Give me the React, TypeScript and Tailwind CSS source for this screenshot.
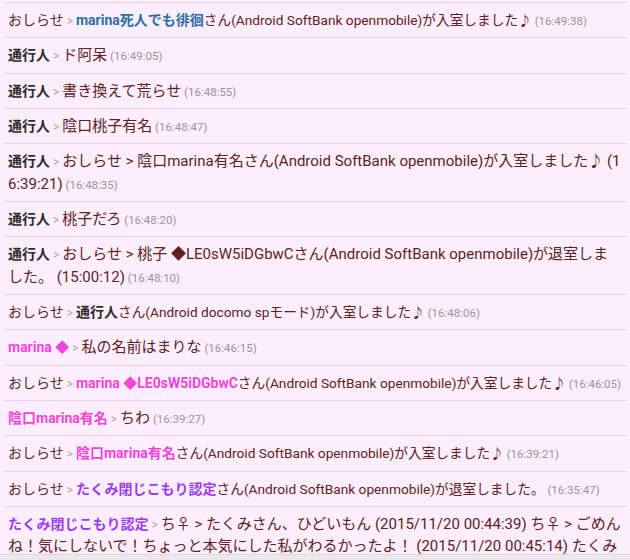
import React from "react";

type Seg = { t: string; c?: string };

const MSG = "text-[#5e2222]";
const NAME_DARK = "font-bold text-[#2e2a2a]";
const BLUE = "font-bold text-[#2c6ea8]";
const PINK = "font-bold text-[#f444dc]";
const PURPLE = "font-bold text-[#9b3df2]";
const NOTICE = "text-[#5a2a2a]";

type Row = { name: string; nameCls: string; body: Seg[]; time: string; notice?: boolean };

const rows: Row[] = [
  {
    name: "おしらせ",
    nameCls: NOTICE,
    notice: true,
    body: [
      { t: "marina死人でも徘徊", c: BLUE },
      { t: "さん(Android SoftBank openmobile)が入室しました♪" },
    ],
    time: "(16:49:38)",
  },
  { name: "通行人", nameCls: NAME_DARK, body: [{ t: "ド阿呆" }], time: "(16:49:05)" },
  { name: "通行人", nameCls: NAME_DARK, body: [{ t: "書き換えて荒らせ" }], time: "(16:48:55)" },
  { name: "通行人", nameCls: NAME_DARK, body: [{ t: "陰口桃子有名" }], time: "(16:48:47)" },
  {
    name: "通行人",
    nameCls: NAME_DARK,
    body: [{ t: "おしらせ > 陰口marina有名さん(Android SoftBank openmobile)が入室しました♪ (16:39:21)" }],
    time: "(16:48:35)",
  },
  { name: "通行人", nameCls: NAME_DARK, body: [{ t: "桃子だろ" }], time: "(16:48:20)" },
  {
    name: "通行人",
    nameCls: NAME_DARK,
    body: [{ t: "おしらせ > 桃子 ◆LE0sW5iDGbwCさん(Android SoftBank openmobile)が退室しました。 (15:00:12)" }],
    time: "(16:48:10)",
  },
  {
    name: "おしらせ",
    nameCls: NOTICE,
    notice: true,
    body: [
      { t: "通行人", c: NAME_DARK },
      { t: "さん(Android docomo spモード)が入室しました♪" },
    ],
    time: "(16:48:06)",
  },
  { name: "marina ◆", nameCls: PINK, body: [{ t: "私の名前はまりな" }], time: "(16:46:15)" },
  {
    name: "おしらせ",
    nameCls: NOTICE,
    notice: true,
    body: [
      { t: "marina ◆LE0sW5iDGbwC", c: PINK },
      { t: "さん(Android SoftBank openmobile)が入室しました♪" },
    ],
    time: "(16:46:05)",
  },
  { name: "陰口marina有名", nameCls: PINK, body: [{ t: "ちわ" }], time: "(16:39:27)" },
  {
    name: "おしらせ",
    nameCls: NOTICE,
    notice: true,
    body: [
      { t: "陰口marina有名", c: PINK },
      { t: "さん(Android SoftBank openmobile)が入室しました♪" },
    ],
    time: "(16:39:21)",
  },
  {
    name: "おしらせ",
    nameCls: NOTICE,
    notice: true,
    body: [
      { t: "たくみ閉じこもり認定", c: PURPLE },
      { t: "さん(Android SoftBank openmobile)が退室しました。" },
    ],
    time: "(16:35:47)",
  },
  {
    name: "たくみ閉じこもり認定",
    nameCls: PURPLE,
    body: [
      {
        t: "ち♀ > たくみさん、ひどいもん (2015/11/20 00:44:39) ち♀ > ごめんね！気にしないで！ちょっと本気にした私がわるかったよ！ (2015/11/20 00:45:14) たくみ閉じこもり認定 > いいよ",
      },
    ],
    time: "(16:35:12)",
  },
];

export default function App() {
  return (
    <div
      className="relative h-[560px] overflow-hidden bg-[#fdeefd] pt-[2px]"
      style={{ fontFamily: 'Roboto, "Noto Sans CJK JP", sans-serif' }}
    >
      <div className="mx-[4px] border-t border-[#e6d3e4]">
        {rows.map((r, i) => (
          <div
            key={i}
            className="border-b border-[#e6d3e4] px-[4px] pt-[6px] pb-[5.8px] text-[15px] leading-[22.5px] break-all"
          >
            <span className={`text-[14px] leading-none ${r.nameCls}`}>{r.name}</span>
            <span className="text-[12px] leading-none text-[#b0a4ac]"> &gt; </span>
            {r.body.map((s, j) => {
              const size = r.notice ? (s.c ? "text-[14px]" : "text-[13.7px]") : "text-[15px]";
              return (
                <span key={j} className={`${size} leading-none ${s.c ?? MSG}`}>
                  {s.t}
                </span>
              );
            })}
            <span className="text-[11.5px] leading-none text-[#a48e98]"> {r.time}</span>
          </div>
        ))}
      </div>
      <div className="absolute bottom-0 left-0 h-[6px] w-full border-t border-[#ddd6dc] bg-[#ebe7ea]" />
    </div>
  );
}
